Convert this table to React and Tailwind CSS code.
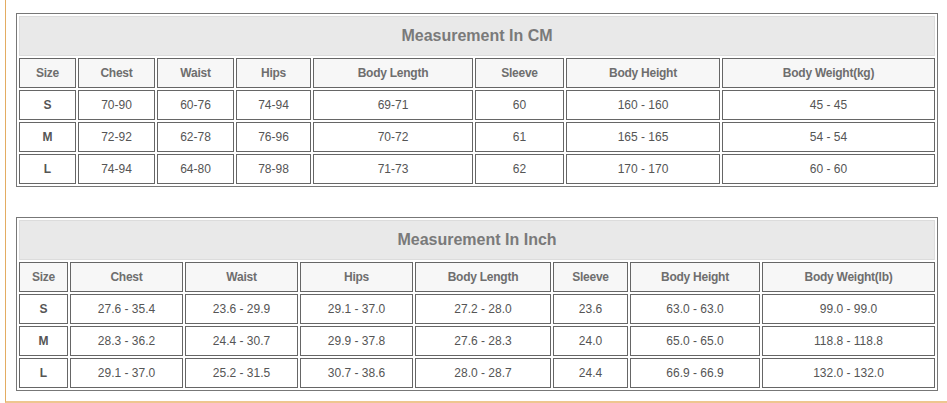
const CM = {
  title: 'Measurement In CM',
  cols: 'grid-cols-[57px_77px_77px_75px_160px_89px_154px_213px]',
  head: ['Size', 'Chest', 'Waist', 'Hips', 'Body Length', 'Sleeve', 'Body Height', 'Body Weight(kg)'],
  rows: [
    ['S', '70-90', '60-76', '74-94', '69-71', '60', '160 - 160', '45 - 45'],
    ['M', '72-92', '62-78', '76-96', '70-72', '61', '165 - 165', '54 - 54'],
    ['L', '74-94', '64-80', '78-98', '71-73', '62', '170 - 170', '60 - 60'],
  ],
}

const INCH = {
  title: 'Measurement In Inch',
  cols: 'grid-cols-[49px_113px_113px_113px_136px_75px_130px_173px]',
  head: ['Size', 'Chest', 'Waist', 'Hips', 'Body Length', 'Sleeve', 'Body Height', 'Body Weight(lb)'],
  rows: [
    ['S', '27.6 - 35.4', '23.6 - 29.9', '29.1 - 37.0', '27.2 - 28.0', '23.6', '63.0 - 63.0', '99.0 - 99.0'],
    ['M', '28.3 - 36.2', '24.4 - 30.7', '29.9 - 37.8', '27.6 - 28.3', '24.0', '65.0 - 65.0', '118.8 - 118.8'],
    ['L', '29.1 - 37.0', '25.2 - 31.5', '30.7 - 38.6', '28.0 - 28.7', '24.4', '66.9 - 66.9', '132.0 - 132.0'],
  ],
}

function SizeTable({ data }) {
  return (
    <div className={`grid ${data.cols} gap-[2px] p-[2px] w-[922px] border border-[#777]`}>
      <div className="col-span-8 h-[40px] flex items-center justify-center bg-[#e9e9e9] border border-[#dcdcdc] text-[16px] font-bold text-[#7a7a7a]">
        {data.title}
      </div>
      {data.head.map(h => (
        <div key={h} className="h-[30px] flex items-center justify-center bg-[#f7f7f7] border border-[#666] text-[12px] font-bold tracking-[-0.25px] text-[#6e6e6e]">
          {h}
        </div>
      ))}
      {data.rows.map(row =>
        row.map((v, i) => (
          <div
            key={row[0] + i}
            className={`h-[30px] flex items-center justify-center bg-white border border-[#666] text-[12px] text-[#555] ${i === 0 ? 'font-bold' : ''}`}
          >
            {v}
          </div>
        ))
      )}
    </div>
  )
}

export default function App() {
  return (
    <div className="bg-white w-[947px] h-[403px] pl-[5px] overflow-hidden" style={{ fontFamily: '"Liberation Sans", Arial, sans-serif' }}>
      <div className="h-[403px] border-l border-l-[#e3ac62] border-b-2 border-b-[#eec690] pl-[10px] pt-[13px] flex flex-col gap-[30px]">
        <SizeTable data={CM} />
        <SizeTable data={INCH} />
      </div>
    </div>
  )
}
